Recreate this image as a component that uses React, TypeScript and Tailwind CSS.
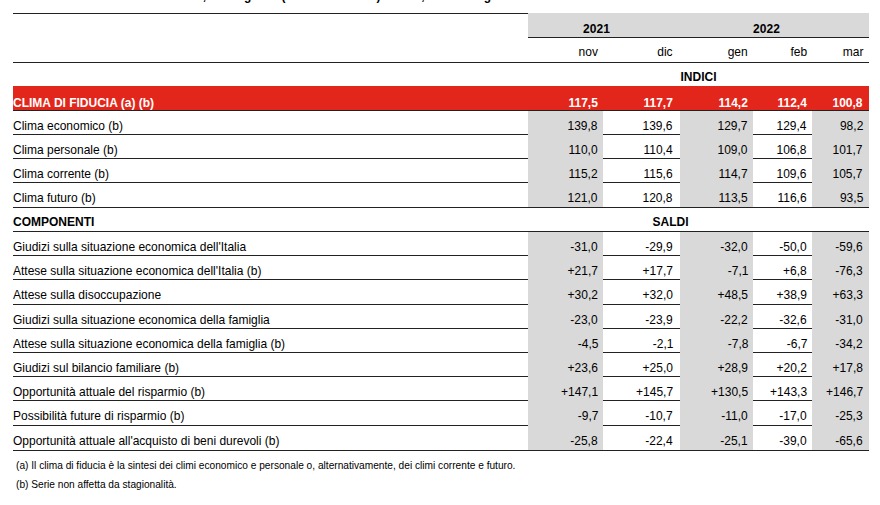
import React from 'react';

const cols = [
  { w: 'w-[75px]', grey: true, pr: 'pr-[5px]' },
  { w: 'w-[77px]', grey: false, pr: 'pr-[7px]' },
  { w: 'w-[73px]', grey: true, pr: 'pr-[5px]' },
  { w: 'w-[59px]', grey: false, pr: 'pr-[5px]' },
  { w: 'w-[57px]', grey: true, pr: 'pr-[6px]' },
];

const indici = [
  { label: 'Clima economico (b)', values: ['139,8', '139,6', '129,7', '129,4', '98,2'] },
  { label: 'Clima personale (b)', values: ['110,0', '110,4', '109,0', '106,8', '101,7'] },
  { label: 'Clima corrente (b)', values: ['115,2', '115,6', '114,7', '109,6', '105,7'] },
  { label: 'Clima futuro (b)', values: ['121,0', '120,8', '113,5', '116,6', '93,5'] },
];

const componenti = [
  { label: "Giudizi sulla situazione economica dell'Italia", values: ['-31,0', '-29,9', '-32,0', '-50,0', '-59,6'] },
  { label: "Attese sulla situazione economica dell'Italia (b)", values: ['+21,7', '+17,7', '-7,1', '+6,8', '-76,3'] },
  { label: 'Attese sulla disoccupazione', values: ['+30,2', '+32,0', '+48,5', '+38,9', '+63,3'] },
  { label: 'Giudizi sulla situazione economica della famiglia', values: ['-23,0', '-23,9', '-22,2', '-32,6', '-31,0'] },
  { label: 'Attese sulla situazione economica della famiglia (b)', values: ['-4,5', '-2,1', '-7,8', '-6,7', '-34,2'] },
  { label: 'Giudizi sul bilancio familiare (b)', values: ['+23,6', '+25,0', '+28,9', '+20,2', '+17,8'] },
  { label: 'Opportunità attuale del risparmio (b)', values: ['+147,1', '+145,7', '+130,5', '+143,3', '+146,7'] },
  { label: 'Possibilità future di risparmio (b)', values: ['-9,7', '-10,7', '-11,0', '-17,0', '-25,3'] },
  { label: "Opportunità attuale all'acquisto di beni durevoli (b)", values: ['-25,8', '-22,4', '-25,1', '-39,0', '-65,6'] },
];

// PDF text is a bit taller than Arial at the same width, so squeeze a 13px face
function S({ children, align = 'left' }: { children: React.ReactNode; align?: 'left' | 'right' | 'center' }) {
  const origin = align === 'right' ? 'origin-right' : align === 'center' ? 'origin-center' : 'origin-left';
  return <span className={`inline-block whitespace-nowrap scale-x-[0.923] ${origin}`}>{children}</span>;
}

function DataRow({ label, values, last, h }: { label: string; values: string[]; last?: boolean; h: string }) {
  const line = last ? '' : 'border-b border-[#222]';
  return (
    <div className={`flex ${h}`}>
      <div className={`w-[515px] pt-[8px] ${line}`}>
        <S>{label}</S>
      </div>
      {cols.map((c, i) => (
        <div key={i} className={`${c.w} ${c.pr} pt-[8px] text-right ${c.grey ? 'bg-[#d9d9d9]' : line}`}>
          <S align="right">{values[i]}</S>
        </div>
      ))}
    </div>
  );
}

export default function App() {
  return (
    <div className="w-[880px] h-[505px] bg-white overflow-hidden font-['Liberation_Sans',Arial,sans-serif] text-[13px] leading-[14px] text-black">
      {/* title line, cut off at the top edge */}
      <div className="h-[13px] overflow-hidden">
        <div className="-mt-[11px] pl-[38px] font-bold whitespace-nowrap">
          <S>Novembre 2021 - marzo 2022, indici grezzi (base 2010 = 100) e saldi, dati destagionalizzati</S>
        </div>
      </div>

      <div className="ml-[13px] w-[856px]">
        {/* header */}
        <div className="flex">
          <div className="w-[515px] h-[50px] border-y border-[#222]" />
          <div className="w-[341px] flex flex-col">
            <div className="flex h-[25px] bg-[#d9d9d9] border-b border-[#222] font-bold">
              <div className="w-[152px] pr-[16px] pt-[9px] text-center">
                <S align="center">2021</S>
              </div>
              <div className="w-[189px] pr-[16px] pt-[9px] text-center">
                <S align="center">2022</S>
              </div>
            </div>
            <div className="flex h-[25px] border-b border-[#222]">
              {['nov', 'dic', 'gen', 'feb', 'mar'].map((m, i) => (
                <div key={m} className={`${cols[i].w} ${cols[i].pr} pt-[7px] text-right`}>
                  <S align="right">{m}</S>
                </div>
              ))}
            </div>
          </div>
        </div>

        <div className="flex h-[23px] font-bold">
          <div className="w-[515px]" />
          <div className="w-[341px] pt-[7px] text-center">
            <S align="center">INDICI</S>
          </div>
        </div>

        {/* clima di fiducia */}
        <div className="flex h-[25px] bg-[#e3261b] text-white font-bold border-b border-[#222]">
          <div className="w-[515px] pt-[10px]">
            <S>CLIMA DI FIDUCIA (a) (b)</S>
          </div>
          {['117,5', '117,7', '114,2', '112,4', '100,8'].map((v, i) => (
            <div key={i} className={`${cols[i].w} ${cols[i].pr} pt-[10px] text-right`}>
              <S align="right">{v}</S>
            </div>
          ))}
        </div>

        {indici.map((r, i) => (
          <DataRow key={r.label} label={r.label} values={r.values} h="h-[24px]" last={i === indici.length - 1} />
        ))}

        <div className="flex h-[25px] border-y border-[#222] font-bold">
          <div className="w-[515px] pt-[7px]">
            <S>COMPONENTI</S>
          </div>
          <div className="w-[341px] pr-[56px] pt-[7px] text-center">
            <S align="center">SALDI</S>
          </div>
        </div>

        <div className="border-b border-[#222]">
          {componenti.map((r, i) => (
            <DataRow key={r.label} label={r.label} values={r.values} h="h-[24.2px]" last={i === componenti.length - 1} />
          ))}
        </div>

        <div className="pl-[3px] pt-[5px] text-[11px] leading-[19px]">
          <p>
            <S>(a) Il clima di fiducia è la sintesi dei climi economico e personale o, alternativamente, dei climi corrente e futuro.</S>
          </p>
          <p>
            <S>(b) Serie non affetta da stagionalità.</S>
          </p>
        </div>
      </div>
    </div>
  );
}
